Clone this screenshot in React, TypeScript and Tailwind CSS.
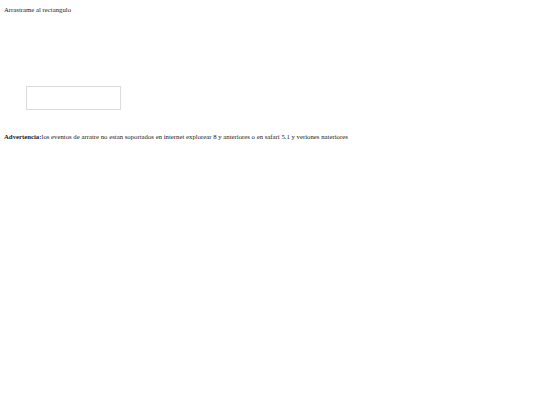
export default function App() {
  return (
    <div className="min-h-screen bg-white px-[4px] pt-[6px] text-[6.75px] leading-[8px] text-[#1a1a1a]" style={{ fontFamily: '"Liberation Serif", "Times New Roman", serif' }}>
      <p>Arrastrame al rectangulo</p>
      {/* zona de destino */}
      <div className="mt-[72px] ml-[22px] h-[24px] w-[95px] border border-[#dcdcdc]" />
      <p className="mt-[23px]">
        <b>Advertencia:</b>los eventos de arratre no estan soportados en internet explorear 8 y anteriores o en safari 5.1 y veriones nateriores
      </p>
    </div>
  );
}
